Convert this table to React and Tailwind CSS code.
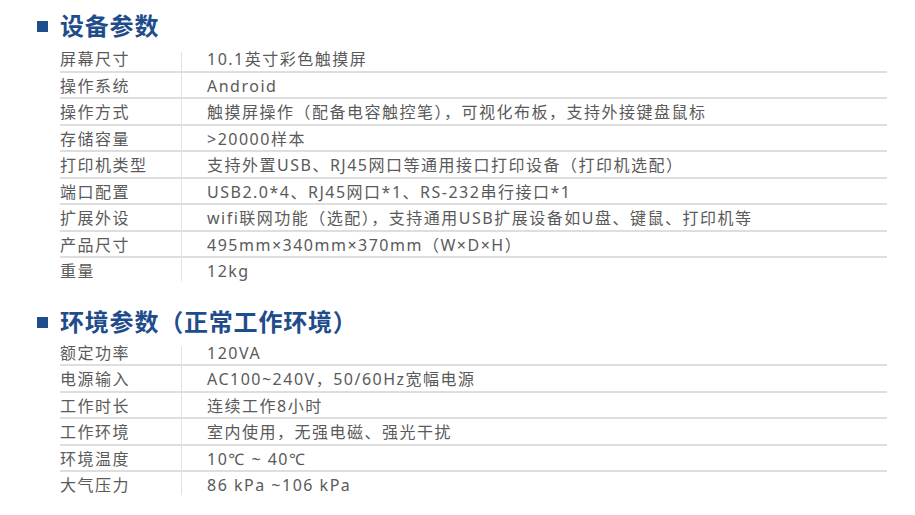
import React from "react";

const spec = [
  ["屏幕尺寸", "10.1英寸彩色触摸屏"],
  ["操作系统", "Android"],
  ["操作方式", "触摸屏操作（配备电容触控笔），可视化布板，支持外接键盘鼠标"],
  ["存储容量", ">20000样本"],
  ["打印机类型", "支持外置USB、RJ45网口等通用接口打印设备（打印机选配）"],
  ["端口配置", "USB2.0*4、RJ45网口*1、RS-232串行接口*1"],
  ["扩展外设", "wifi联网功能（选配），支持通用USB扩展设备如U盘、键鼠、打印机等"],
  ["产品尺寸", "495mm×340mm×370mm（W×D×H）"],
  ["重量", "12kg"],
];

const env = [
  ["额定功率", "120VA"],
  ["电源输入", "AC100~240V，50/60Hz宽幅电源"],
  ["工作时长", "连续工作8小时"],
  ["工作环境", "室内使用，无强电磁、强光干扰"],
  ["环境温度", "10℃ ~ 40℃"],
  ["大气压力", "86 kPa ~106 kPa"],
];

function Heading({ children, className }) {
  return (
    <div className={"flex h-[32px] items-center " + (className || "")}>
      <div className="ml-[37px] h-[11px] w-[11px] bg-[#1f4d8c]" />
      <div className="ml-[12px] text-[24px] font-bold leading-[32px] tracking-[0.8px] text-[#1f4d8c]">
        {children}
      </div>
    </div>
  );
}

function Table({ rows, className }) {
  return (
    <div className={"ml-[60px] flex w-[827px] flex-col " + (className || "")}>
      {rows.map(([k, v], i) => {
        const last = i === rows.length - 1;
        const first = i === 0;
        return (
          <div
            key={k}
            className={
              "flex items-stretch " +
              (last ? "h-[24.5px]" : "h-[26.5px] border-b-2 border-[#dedede]")
            }
          >
            <div className="flex w-[121px] items-center whitespace-nowrap pt-[2px]">{k}</div>
            <div
              className={
                "w-px bg-[#e2e2e2] " +
                (first ? "mt-[6px] " : "") +
                (last ? "mb-[2px]" : "")
              }
            />
            <div className="flex items-center whitespace-nowrap pl-[25px] pt-[2px]">{v}</div>
          </div>
        );
      })}
    </div>
  );
}

export default function App() {
  return (
    <div
      className="h-[515px] w-[915px] overflow-hidden bg-white pt-[10px] text-[16px] tracking-[1.5px] text-[#5a5a5a]"
      style={{ fontFamily: '"Noto Sans", "Noto Sans CJK SC", sans-serif' }}
    >
      <Heading>设备参数</Heading>
      <Table rows={spec} className="mt-[4px]" />
      <Heading className="mt-[23.5px]">环境参数（正常工作环境）</Heading>
      <Table rows={env} className="mt-[1.5px]" />
    </div>
  );
}
